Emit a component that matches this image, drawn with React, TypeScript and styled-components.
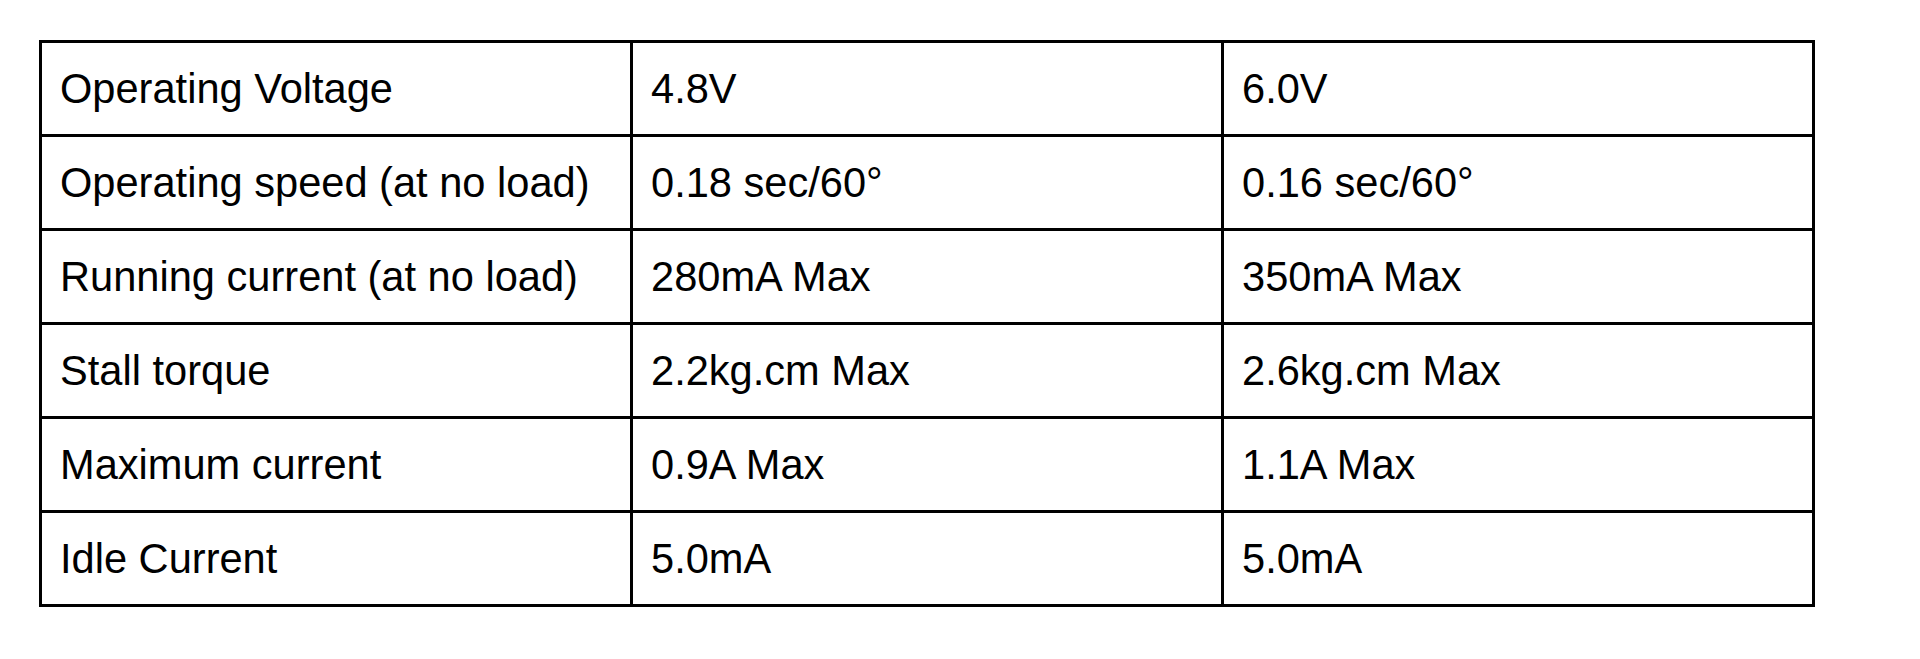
import React from "react";
import styled, { createGlobalStyle } from "styled-components";

const GlobalStyle = createGlobalStyle`
  html, body {
    margin: 0;
    padding: 0;
    background: #ffffff;
  }
`;

const Page = styled.div`
  padding: 40px 0 0 39px;
  font-family: "Liberation Sans", Arial, sans-serif;
  color: #000000;
`;

const SpecTable = styled.table`
  width: 1776px;
  table-layout: fixed;
  border-collapse: collapse;
  border: 3px solid #000000;
`;

const Row = styled.tr`
  height: 94px;
`;

const Cell = styled.td`
  border: 3px solid #000000;
  padding: 0 18px;
  font-size: 41.6px;
  line-height: normal;
  vertical-align: middle;
  white-space: nowrap;
`;

const specs = [
  ["Operating Voltage", "4.8V", "6.0V"],
  ["Operating speed (at no load)", "0.18 sec/60°", "0.16 sec/60°"],
  ["Running current (at no load)", "280mA Max", "350mA Max"],
  ["Stall torque", "2.2kg.cm Max", "2.6kg.cm Max"],
  ["Maximum current", "0.9A Max", "1.1A Max"],
  ["Idle Current", "5.0mA", "5.0mA"],
];

export default function App() {
  return (
    <>
      <GlobalStyle />
      <Page>
        <SpecTable>
          <tbody>
            {specs.map((row) => (
              <Row key={row[0]}>
                {row.map((value, i) => (
                  <Cell key={i}>{value}</Cell>
                ))}
              </Row>
            ))}
          </tbody>
        </SpecTable>
      </Page>
    </>
  );
}
